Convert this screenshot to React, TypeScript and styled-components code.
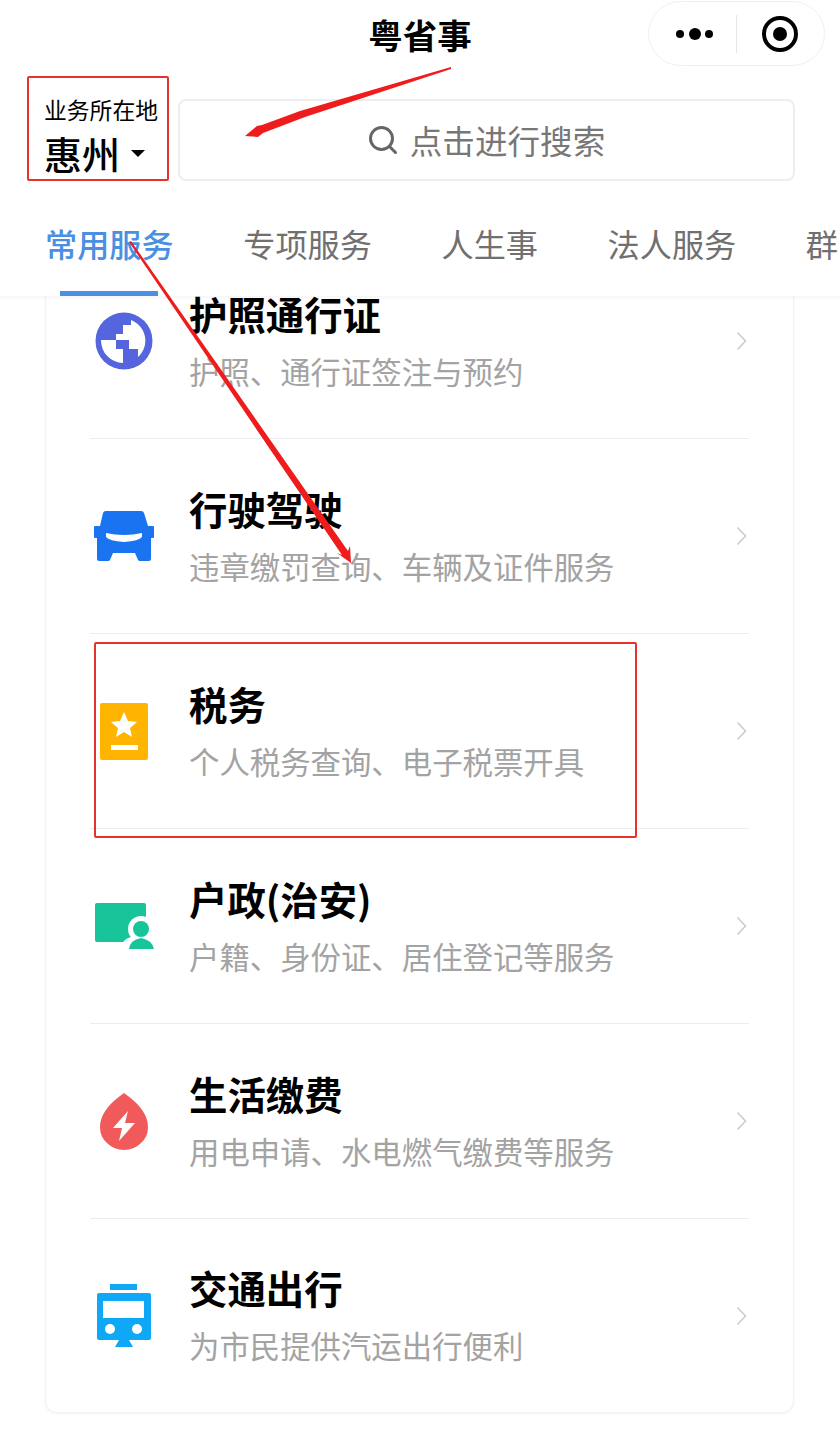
import styled, { createGlobalStyle } from "styled-components"

const GlobalStyle = createGlobalStyle`
    html, body { margin:0; padding:0; background:#fff; }
    body { font-family:"Noto Sans CJK SC", "Noto Sans", sans-serif; }
    #root { width:840px; height:1446px; overflow:hidden; }
`

const GlobeIcon = () => (
    <svg width="58" height="58" viewBox="0 0 58 58">
        <circle cx="29" cy="29" r="28.5" fill="#5465dd" />
        <path d="M36 8V13H28V22H21V28H34V37H43V45A22 22 0 0 0 36 8z" fill="#fff" />
        <path d="M6 28H21V37H28V51A22.5 22.5 0 0 1 6 28z" fill="#fff" />
    </svg>
)

const CarIcon = () => (
    <svg width="60" height="50" viewBox="0 0 60 50">
        <path d="M9 2q.5-2 3-2h35q2.500 0 3 2l4 13h5q1 0 1 1v10q0 1-1 1h-2v21q0 2-2 2h-9q-1.500 0-2-1l-3-7h-22l-3 7q-.5 1-2 1h-9q-2 0-2-2v-21h-2q-1 0-1-1v-10q0-1 1-1h5z" fill="#1a73f0" />
        <path d="M12 22q18 4 36 0v4q-3 4-18 5q-15-1-18-5z" fill="#fff" />
    </svg>
)

const TaxIcon = () => (
    <svg width="48" height="57" viewBox="0 0 48 57">
        <rect width="48" height="57" rx="2" fill="#ffb400" />
        <path d="M24 9l4 9 9 1-7 6 2 9-8-5-8 5 2-9-7-6 9-1z" fill="#fff" />
        <rect x="11" y="42" width="27" height="5" fill="#fff" />
    </svg>
)

const HouseholdIcon = () => (
    <svg width="60" height="46" viewBox="0 0 60 46">
        <rect x="1" width="51" height="39" rx="2" fill="#18c59b" />
        <circle cx="47" cy="26" r="13" fill="#fff" />
        <path d="M27 46q1-10 10-12h20q3 4 3 12z" fill="#fff" />
        <circle cx="47" cy="26" r="8" fill="#18c59b" />
        <path d="M35 46q1-9 12-11q11 2 13 11z" fill="#18c59b" />
    </svg>
)

const PowerIcon = () => (
    <svg width="48" height="57" viewBox="0 0 48 57">
        <path d="M24 0l4 3q20 15 20 31q0 10-7 16q-7 7-17 7q-10 0-17-7q-7-6-7-16q0-16 20-31z" fill="#f05a5a" />
        <path d="M28 18l-15 17h9l-3 13 16-18h-10z" fill="#fff" />
    </svg>
)

const TransitIcon = () => (
    <svg width="54" height="63" viewBox="0 0 54 63">
        <rect x="13" width="27" height="6" fill="#0ea8f6" />
        <rect y="9" width="54" height="47" rx="2" fill="#0ea8f6" />
        <rect x="6" y="17" width="41" height="17" fill="#fff" />
        <ellipse cx="13" cy="45" rx="5" ry="5" fill="#fff" />
        <ellipse cx="40" cy="45" rx="5" ry="5" fill="#fff" />
        <path d="M22 56h10l4 7h-18z" fill="#0ea8f6" />
    </svg>
)

const services = [
    { title: "护照通行证", desc: "护照、通行证签注与预约", icon: <GlobeIcon /> },
    { title: "行驶驾驶", desc: "违章缴罚查询、车辆及证件服务", icon: <CarIcon /> },
    { title: "税务", desc: "个人税务查询、电子税票开具", icon: <TaxIcon /> },
    { title: "户政(治安)", desc: "户籍、身份证、居住登记等服务", icon: <HouseholdIcon /> },
    { title: "生活缴费", desc: "用电申请、水电燃气缴费等服务", icon: <PowerIcon /> },
    { title: "交通出行", desc: "为市民提供汽运出行便利", icon: <TransitIcon /> },
]

const tabs = ["常用服务", "专项服务", "人生事", "法人服务", "群"]

export default function App() {
    return (
        <Page>
            <GlobalStyle />
            <Header>
                <TitleBar>
                    <Title>粤省事</Title>
                    <Capsule>
                        <svg width="40" height="14" viewBox="0 0 40 14">
                            <circle cx="5" cy="7" r="4" fill="#000" />
                            <circle cx="20" cy="7" r="6" fill="#000" />
                            <circle cx="34" cy="7" r="4" fill="#000" />
                        </svg>
                        <CapsuleLine />
                        <svg width="38" height="38" viewBox="0 0 38 38">
                            <circle cx="19" cy="19" r="16" fill="none" stroke="#000" strokeWidth="4" />
                            <circle cx="19" cy="19" r="7" fill="#000" />
                        </svg>
                    </Capsule>
                </TitleBar>
                <SearchRow>
                    <Location>
                        <LocationLabel>业务所在地</LocationLabel>
                        <City>
                            惠州
                            <Caret />
                        </City>
                    </Location>
                    <SearchBox>
                        <svg width="30" height="30" viewBox="0 0 30 30">
                            <circle cx="13.5" cy="13.5" r="11" fill="none" stroke="#666" strokeWidth="3" />
                            <path d="M21.5 21.5l6 6" stroke="#666" strokeWidth="3" strokeLinecap="round" />
                        </svg>
                        <SearchText>点击进行搜索</SearchText>
                    </SearchBox>
                </SearchRow>
                <Tabs>
                    {tabs.map((t, i) => (
                        <Tab key={t} $active={i === 0}>{t}</Tab>
                    ))}
                </Tabs>
            </Header>
            <Card>
                {services.map((s) => (
                    <Row key={s.title}>
                        <IconSlot>{s.icon}</IconSlot>
                        <RowText>
                            <RowTitle>{s.title}</RowTitle>
                            <RowDesc>{s.desc}</RowDesc>
                        </RowText>
                        <svg width="11" height="20" viewBox="0 0 11 20">
                            <path d="M1.5 1.5l8 8.500-8 8.500" fill="none" stroke="#ccc" strokeWidth="1.600" />
                        </svg>
                    </Row>
                ))}
            </Card>
            <Annotations width="840" height="1446" viewBox="0 0 840 1446">
                <rect x="28" y="77" width="140" height="103" fill="none" stroke="#e5322d" strokeWidth="2" rx="1" />
                <rect x="95" y="643" width="541" height="194" fill="none" stroke="#e5322d" strokeWidth="2" rx="1" />
                <path d="M451 67L300 111 262 125 257 126 245 136 258 137 263 133 305 117 451 69z" fill="#ee1c1c" />
                <path d="M129 242L131 241 348 551 350 546 351 563 337 553 342 555z" fill="#ee1c1c" />
            </Annotations>
        </Page>
    )
}

const Page = styled.div`
    position:relative;
    width:840px;
    height:1446px;
    overflow:hidden;
    background:#fff;
`

const Header = styled.header`
    position:relative;
    z-index:2;
    height:296px;
    background:#fff;
    box-shadow:0 1px 4px rgba(0,0,0,0.06);
`

const TitleBar = styled.div`
    position:relative;
    height:68px;
    display:flex;
    align-items:center;
    justify-content:center;
`

const Title = styled.h1`
    margin:0;
    font-size:34.5px;
    line-height:68px;
    font-weight:700;
    color:#000;
`

const Capsule = styled.div`
    position:absolute;
    top:1px;
    right:15px;
    width:177px;
    height:65px;
    box-sizing:border-box;
    border:1px solid #f0f0f0;
    border-radius:33px;
    background:#fff;
    display:flex;
    align-items:center;
    padding-left:26px;
`

const CapsuleLine = styled.div`
    width:1px;
    height:38px;
    margin:0 24px 0 21px;
    background:#e6e6e6;
`

const SearchRow = styled.div`
    display:flex;
    align-items:flex-start;
    padding:31px 45px 0 45px;
    height:113px;
    box-sizing:border-box;
`

const Location = styled.div`
    width:134px;
    flex:none;
    margin-left:-1px;
    margin-right:1px;
    margin-top:-2px;
    color:#000;
`

const LocationLabel = styled.div`
    font-size:22.8px;
    line-height:26px;
`

const City = styled.div`
    display:flex;
    align-items:center;
    font-size:38px;
    line-height:52px;
    font-weight:500;
    margin-top:4px;
`

const Caret = styled.span`
    margin-left:11px;
    width:0;
    height:0;
    border-left:7px solid transparent;
    border-right:7px solid transparent;
    border-top:7px solid #000;
`

const SearchBox = styled.div`
    flex:none;
    width:617px;
    height:82px;
    margin-left:-1px;
    box-sizing:border-box;
    border:2.5px solid #eeeeee;
    border-radius:8px;
    display:flex;
    align-items:center;
    justify-content:center;
    gap:12px;
`

const SearchText = styled.span`
    font-size:32.6px;
    line-height:44px;
    color:#777;
`

const Tabs = styled.nav`
    display:flex;
    gap:69.5px;
    padding-left:45px;
    height:115px;
    white-space:nowrap;
`

const Tab = styled.div<{ $active?: boolean }>`
    position:relative;
    flex:none;
    font-size:32.2px;
    line-height:44px;
    padding-top:40px;
    color:${(p) => (p.$active ? "#4a90e2" : "#707070")};
    font-weight:${(p) => (p.$active ? 500 : 400)};

    &::after{
        content:"";
        display:${(p) => (p.$active ? "block" : "none")};
        position:absolute;
        left:15px;
        right:16px;
        bottom:0;
        height:5px;
        background:#4a90e2;
    }
`

const Card = styled.section`
    position:relative;
    z-index:1;
    margin:-53px 46px 0 45px;
    padding:0 44px;
    border:1px solid #f2f2f2;
    border-radius:12px;
    box-shadow:0 1px 3px rgba(0,0,0,0.05);
    background:#fff;
`

const Row = styled.div`
    height:195px;
    box-sizing:border-box;
    display:flex;
    align-items:center;
    padding-right:2px;
    border-bottom:1px solid #ececec;

    &:last-child{ border-bottom:none; height:193px; }
`

const IconSlot = styled.div`
    flex:none;
    width:68px;
    margin-right:31px;
    display:flex;
    justify-content:center;
`

const RowText = styled.div`
    flex:1;
    min-width:0;
    padding-bottom:5px;
`

const RowTitle = styled.div`
    font-size:38.4px;
    line-height:52px;
    font-weight:700;
    color:#000;
`

const RowDesc = styled.div`
    margin-top:12px;
    font-size:30.4px;
    line-height:40px;
    color:#a3a3a3;
`

const Annotations = styled.svg`
    position:absolute;
    left:0;
    top:0;
    z-index:3;
    pointer-events:none;
`
